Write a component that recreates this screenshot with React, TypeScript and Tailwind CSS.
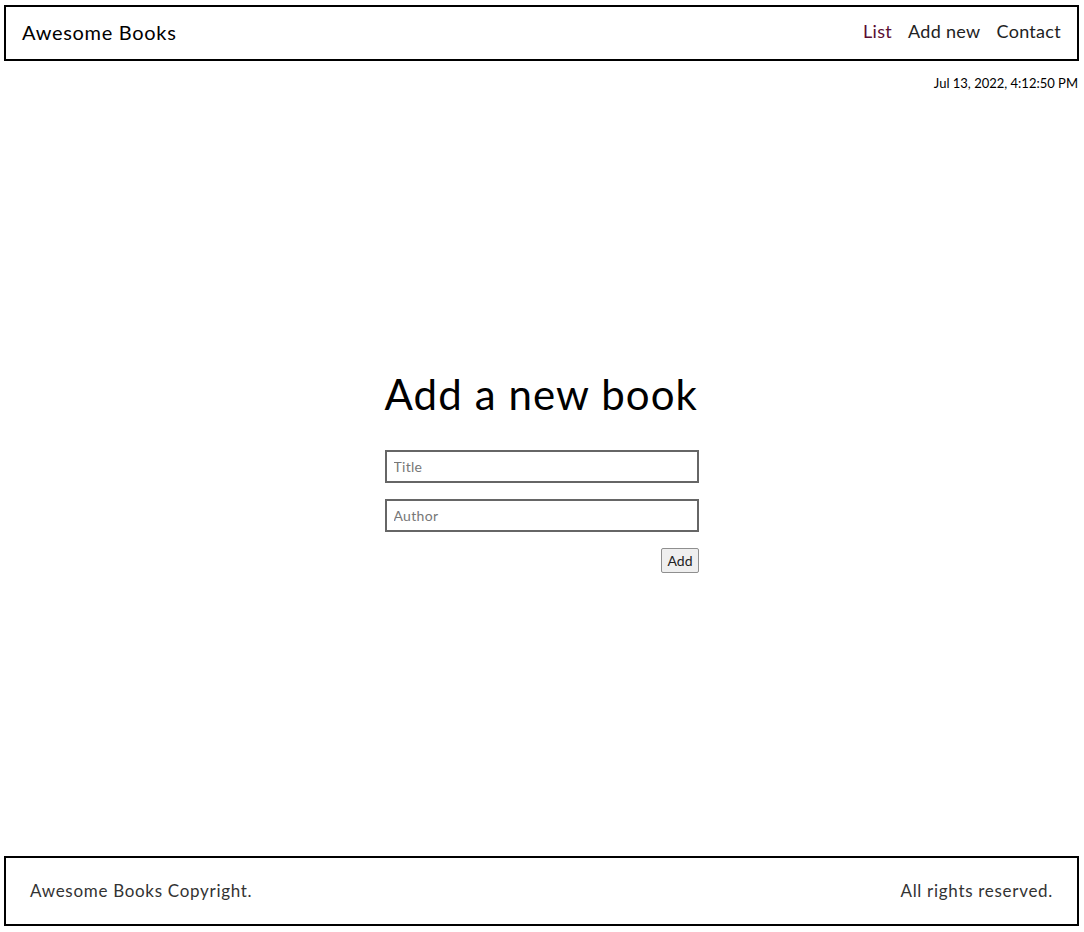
import React from "react";

export default function App() {
  return (
    <div
      className="h-[932px] w-full flex flex-col bg-white text-black pl-[4px] pr-[5px]"
      style={{ fontFamily: "Lato, 'Noto Sans', sans-serif" }}
    >
      <header className="mt-[5px] h-[56px] border-2 border-black flex items-center justify-between pl-[16px] pr-[16px] pb-[3px]">
        <h1 className="text-[20px] tracking-[0.7px]">Awesome Books</h1>
        <nav className="flex gap-[16px] text-[18px] tracking-[0.3px]">
          <a className="text-[#5a0d33]">List</a>
          <a className="text-[#222]">Add new</a>
          <a className="text-[#222]">Contact</a>
        </nav>
      </header>
      <div className="flex justify-end pr-[1px] pt-[14px] text-[13px] leading-[16px]">
        Jul 13, 2022, 4:12:50 PM
      </div>
      <main className="flex-1 flex items-center justify-center">
        <div className="w-[314px] flex flex-col mt-[-6px]">
          <h2 className="text-[42px] leading-[52px] tracking-[1.1px] mb-[30px] whitespace-nowrap">Add a new book</h2>
          <input
            placeholder="Title"
            className="h-[33px] border-2 border-[#666] px-[7px] text-[14px] tracking-[0.3px] placeholder:text-[#777] outline-none mb-[16px]"
            style={{ fontFamily: "Lato, sans-serif" }}
          />
          <input
            placeholder="Author"
            className="h-[33px] border-2 border-[#666] px-[7px] text-[14px] tracking-[0.3px] placeholder:text-[#777] outline-none mb-[16px]"
            style={{ fontFamily: "Lato, sans-serif" }}
          />
          <div className="flex justify-end">
            <button className="h-[25px] px-[5px] text-[14px] bg-[#efefef] border border-[#8f8f8f] rounded-[2px] text-[#222]">
              Add
            </button>
          </div>
        </div>
      </main>
      <footer className="mb-[6px] h-[70px] border-2 border-black flex items-center justify-between pl-[24px] pr-[24px] text-[17px] text-[#333] tracking-[0.7px]">
        <span>Awesome Books Copyright.</span>
        <span>All rights reserved.</span>
      </footer>
    </div>
  );
}
